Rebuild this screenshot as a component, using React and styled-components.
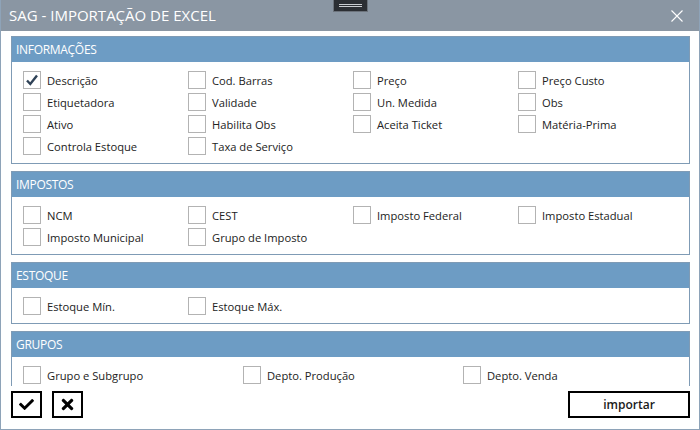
import React from "react";
import styled, { createGlobalStyle } from "styled-components";
import { FaCheck, FaTimes } from "react-icons/fa";

const GlobalStyle = createGlobalStyle`
  html, body { margin: 0; padding: 0; background: #ffffff; }
  * { box-sizing: border-box; }
`;

const FONT = `"Open Sans", "Noto Sans", "Liberation Sans", sans-serif`;

const Window = styled.div`
  width: 700px;
  height: 430px;
  display: flex;
  flex-direction: column;
  position: relative;
  background: #ffffff;
  border: 1px solid #8ea3b8;
  border-top: none;
  font-family: ${FONT};
  overflow: hidden;
`;

const TitleBar = styled.div`
  height: 31px;
  flex: none;
  display: flex;
  align-items: center;
  justify-content: space-between;
  background: #8a96a3;
  margin: 0 -1px;
  padding: 0 12px 0 9px;
  color: #ffffff;
`;

const Title = styled.div`
  font-size: 15px;
  padding-bottom: 1px;
`;

const CloseButton = styled.button`
  width: 18px;
  height: 18px;
  padding: 0;
  border: none;
  background: transparent;
  display: flex;
  align-items: center;
  justify-content: center;
  margin-right: 2px;
`;

const Grip = styled.div`
  position: absolute;
  top: 0;
  left: 332px;
  width: 35px;
  height: 12px;
  background: #2b2e33;
  border: 1px solid #6c737c;
  border-top: none;
  display: flex;
  flex-direction: column;
  justify-content: center;
  gap: 1px;
  padding: 0 5px 1px;
`;

const GripLine = styled.div`
  height: 1px;
  background: #c9ccd0;
`;

const Scroller = styled.div`
  height: 355px;
  flex: none;
  overflow: hidden;
  padding: 5px 9px 0 10px;
  display: flex;
  flex-direction: column;
  gap: 7px;
`;

const Section = styled.section`
  border: 1px solid #7f9bb5;
  flex: none;
`;

const SectionHeader = styled.div`
  height: 25px;
  background: #6d9cc4;
  color: #ffffff;
  font-size: 12px;
  display: flex;
  align-items: center;
  padding-left: 4px;
  letter-spacing: -0.3px;
`;

const OptionGrid = styled.div`
  display: grid;
  grid-template-columns: repeat(${(p) => p.$cols}, ${(p) => p.$colWidth}px);
  grid-auto-rows: 22px;
  padding: 7px 11px 6px 11px;
`;

const Option = styled.label`
  display: flex;
  align-items: center;
  gap: 6px;
  font-size: 11.2px;
  color: #222222;
  white-space: nowrap;
`;

const Box = styled.span`
  width: 18px;
  height: 18px;
  flex: none;
  border: 1px solid #b3b3b3;
  background: #ffffff;
  display: flex;
  align-items: center;
  justify-content: center;
`;

const Footer = styled.div`
  flex: 1;
  display: flex;
  align-items: flex-start;
  justify-content: space-between;
  padding: 5px 9px 0 10px;
`;

const IconGroup = styled.div`
  display: flex;
  gap: 10px;
`;

const IconButton = styled.button`
  width: 31px;
  height: 27px;
  border: 2px solid #000000;
  background: #ffffff;
  padding: 0;
  display: flex;
  align-items: center;
  justify-content: center;
  color: #000000;
`;

const ImportButton = styled.button`
  width: 122px;
  height: 27px;
  border: 2px solid #000000;
  background: #ffffff;
  font-family: ${FONT};
  font-size: 12px;
  font-weight: 600;
  color: #1a1a1a;
  padding: 0 0 1px;
`;

const Tick = () => (
  <svg width="16" height="16" viewBox="0 0 16 16">
    <path d="M3 8.5 L6.3 12 L13 3.5" fill="none" stroke="#2f4257" strokeWidth="2.4" strokeLinejoin="miter" />
  </svg>
);

const CloseIcon = () => (
  <svg width="12" height="12" viewBox="0 0 12 12">
    <path d="M0.5 0.5 L11.5 11.5 M11.5 0.5 L0.5 11.5" stroke="#ffffff" strokeWidth="1.1" />
  </svg>
);

const sections = [
  {
    title: "INFORMAÇÕES",
    cols: 4,
    width: 165,
    items: [
      ["Descrição", true],
      ["Cod. Barras"],
      ["Preço"],
      ["Preço Custo"],
      ["Etiquetadora"],
      ["Validade"],
      ["Un. Medida"],
      ["Obs"],
      ["Ativo"],
      ["Habilita Obs"],
      ["Aceita Ticket"],
      ["Matéria-Prima"],
      ["Controla Estoque"],
      ["Taxa de Serviço"],
    ],
  },
  {
    title: "IMPOSTOS",
    cols: 4,
    width: 165,
    items: [
      ["NCM"],
      ["CEST"],
      ["Imposto Federal"],
      ["Imposto Estadual"],
      ["Imposto Municipal"],
      ["Grupo de Imposto"],
    ],
  },
  {
    title: "ESTOQUE",
    cols: 4,
    width: 165,
    items: [["Estoque Mín."], ["Estoque Máx."]],
  },
  {
    title: "GRUPOS",
    cols: 3,
    width: 220,
    items: [["Grupo e Subgrupo"], ["Depto. Produção"], ["Depto. Venda"]],
  },
];

export default function App() {
  return (
    <>
      <GlobalStyle />
      <Window>
        <TitleBar>
          <Title>SAG - IMPORTAÇÃO DE EXCEL</Title>
          <CloseButton aria-label="Fechar">
            <CloseIcon />
          </CloseButton>
        </TitleBar>
        <Grip>
          <GripLine />
          <GripLine />
        </Grip>
        <Scroller>
          {sections.map((s) => (
            <Section key={s.title}>
              <SectionHeader>{s.title}</SectionHeader>
              <OptionGrid $cols={s.cols} $colWidth={s.width}>
                {s.items.map(([label, checked]) => (
                  <Option key={label}>
                    <Box>{checked && <Tick />}</Box>
                    {label}
                  </Option>
                ))}
              </OptionGrid>
            </Section>
          ))}
        </Scroller>
        <Footer>
          <IconGroup>
            <IconButton aria-label="Marcar todos">
              <FaCheck size={15} />
            </IconButton>
            <IconButton aria-label="Desmarcar todos">
              <FaTimes size={17} />
            </IconButton>
          </IconGroup>
          <ImportButton>importar</ImportButton>
        </Footer>
      </Window>
    </>
  );
}
